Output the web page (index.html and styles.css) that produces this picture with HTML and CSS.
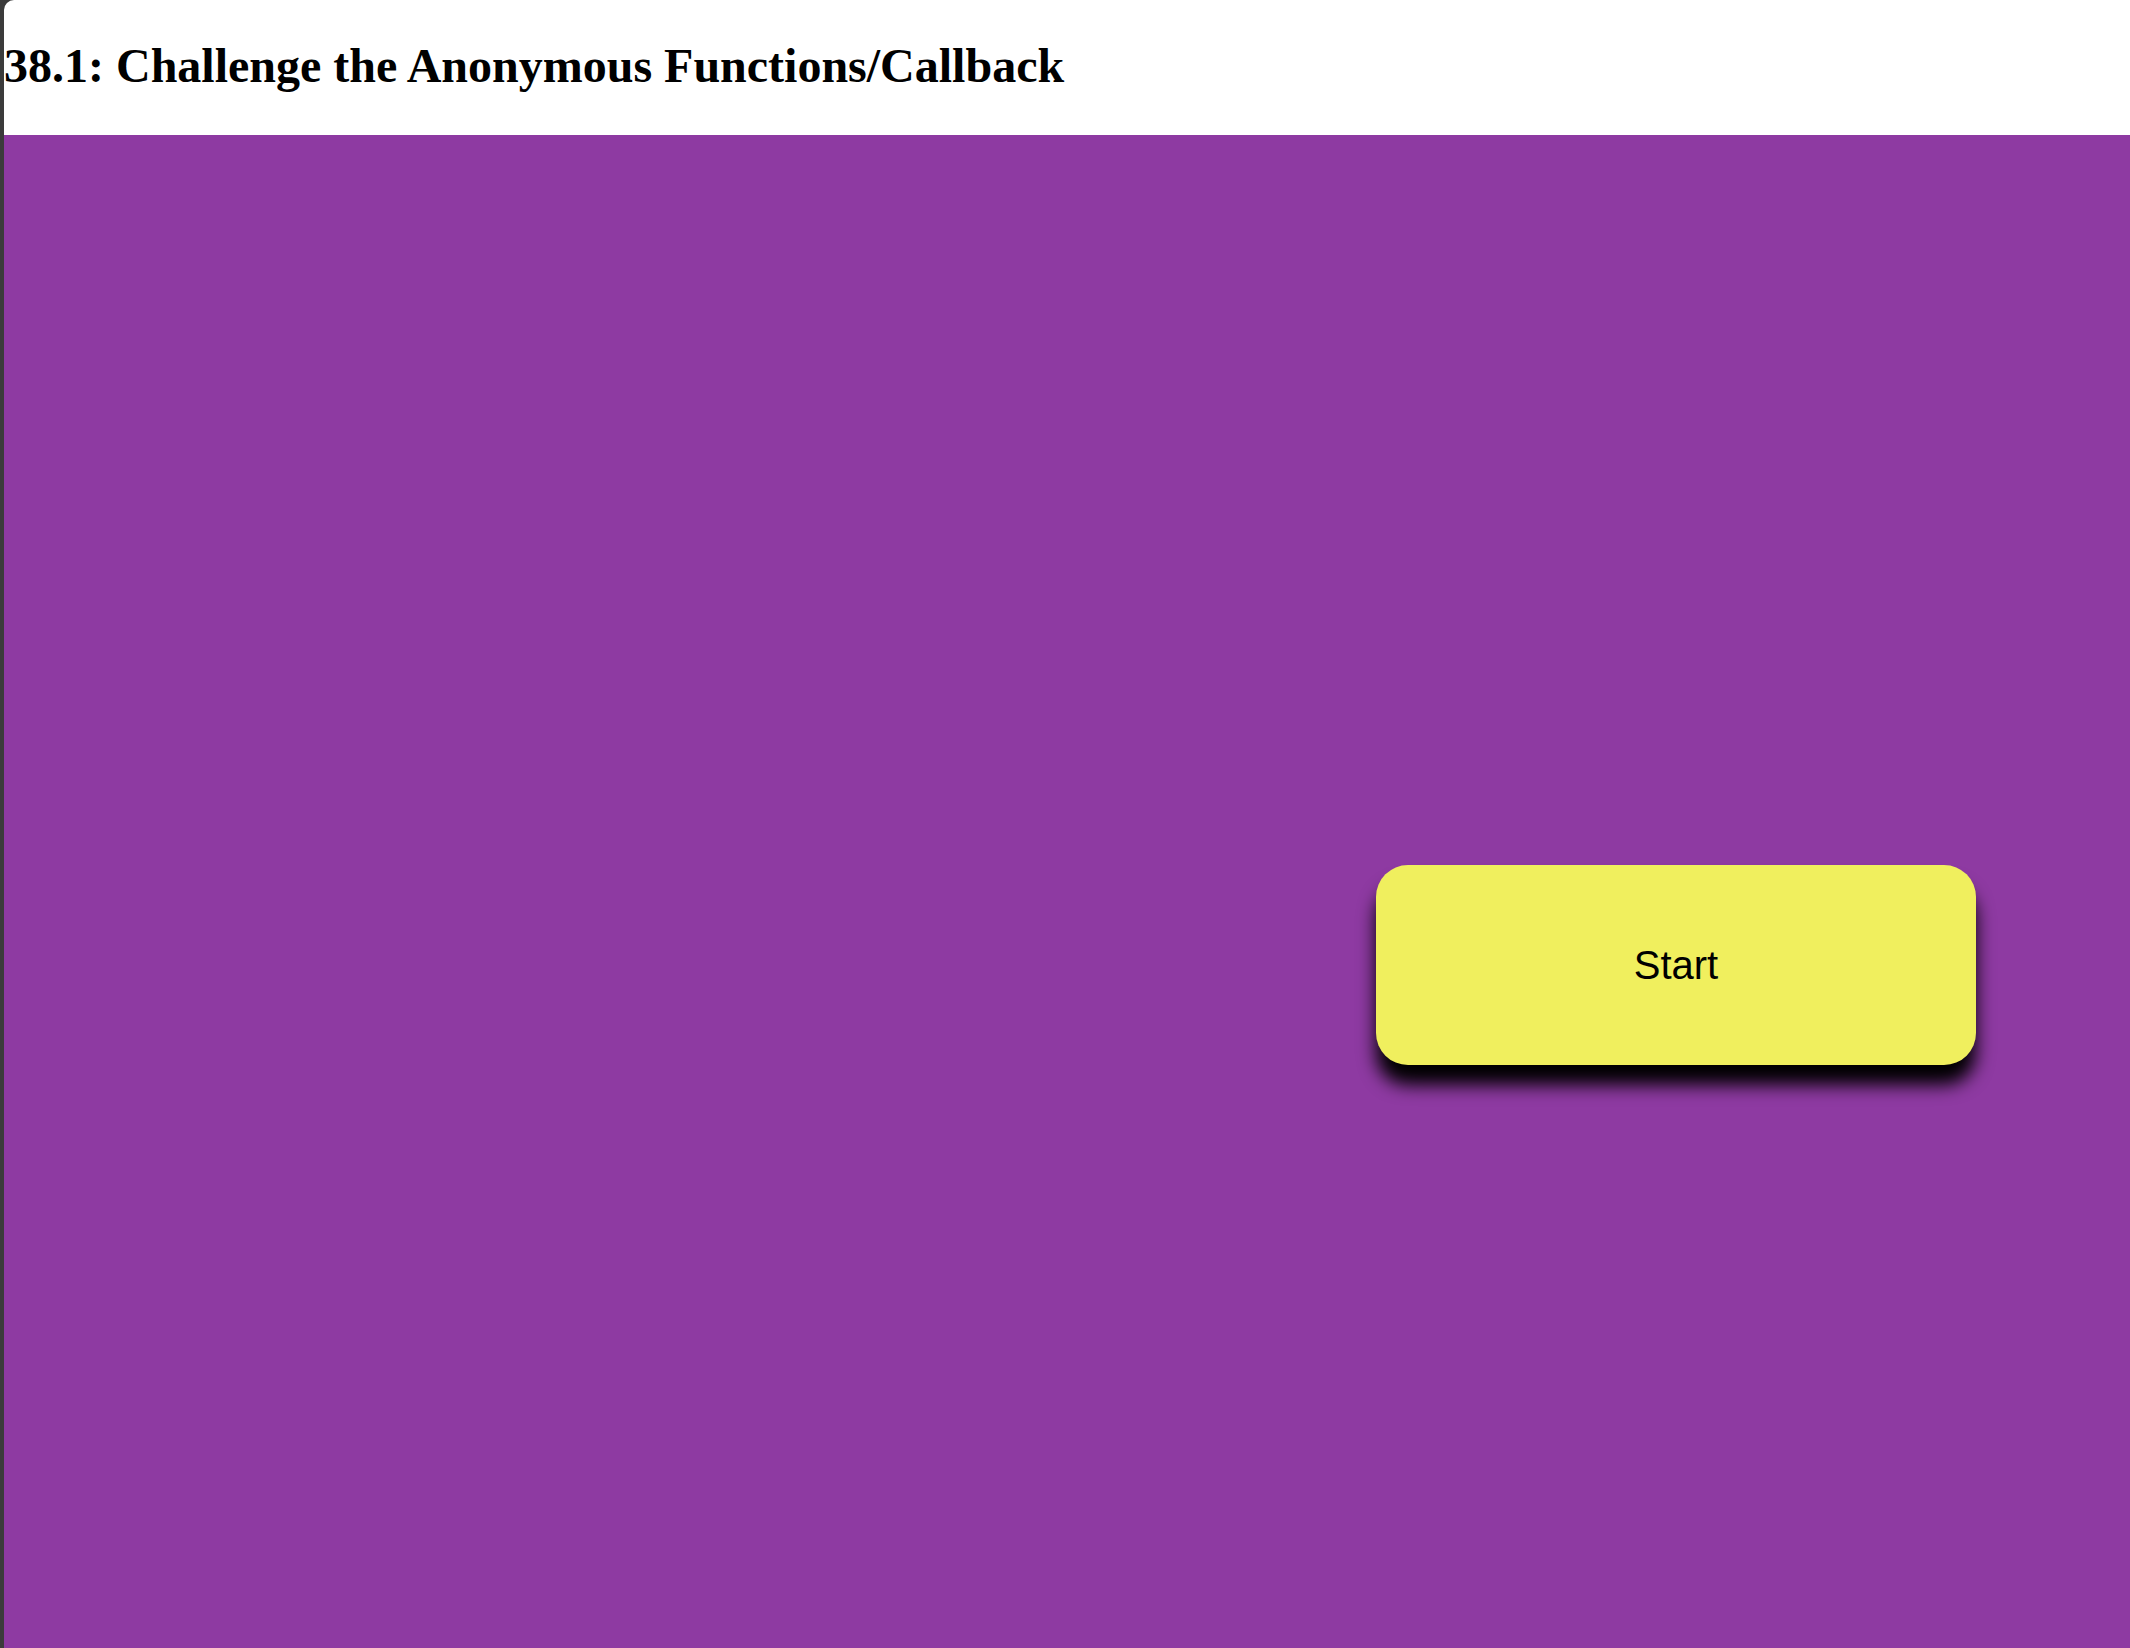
FILE: index.html
```html
<!DOCTYPE html>
<html lang="en">
<head>
<meta charset="utf-8">
<title>38.1: Challenge the Anonymous Functions/Callback</title>
<link rel="stylesheet" href="styles.css">
</head>
<body>
<div class="window">
  <header class="page-header">
    <h1 class="title">38.1: Challenge the Anonymous Functions/Callback</h1>
  </header>
  <main class="stage">
    <button class="start-btn" type="button">Start</button>
  </main>
</div>
</body>
</html>
```
FILE: styles.css
```css
html, body {
  margin: 0;
  padding: 0;
  height: 100%;
}
body {
  background: #3b3b3b;
}
.window {
  margin-left: 4px;
  min-height: 100vh;
  display: flex;
  flex-direction: column;
  background: #ffffff;
  border-top-left-radius: 10px;
  overflow: hidden;
}
.page-header {
  height: 135px;
  box-sizing: border-box;
  padding-top: 38px;
}
.title {
  margin: 0;
  font-family: "Liberation Serif", "Times New Roman", serif;
  font-weight: bold;
  font-size: 48px;
  line-height: 55px;
  color: #000;
  white-space: nowrap;
}
.stage {
  flex: 1;
  background: #8e3aa2;
  padding: 730px 0 0 1372px;
}
.start-btn {
  display: flex;
  align-items: center;
  justify-content: center;
  width: 600px;
  height: 200px;
  border: none;
  border-radius: 32px;
  background: #f0ef5e;
  color: #000;
  font-family: "Liberation Sans", Arial, sans-serif;
  font-size: 40px;
  padding: 0;
  box-shadow: 0 20px 18px #000;
  cursor: pointer;
}
```
